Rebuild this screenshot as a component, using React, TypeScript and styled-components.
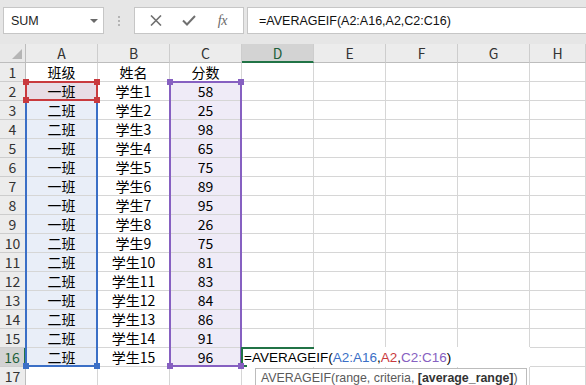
import React from "react";
import styled, { createGlobalStyle } from "styled-components";

const GlobalStyle = createGlobalStyle`
  html, body { margin: 0; padding: 0; background: #ffffff; overflow: hidden; }
  #root { width: 586px; height: 385px; }
`;

const COLW = 72;
const ROWH = 19;
const HDRW = 26;

const BLUE = "#3b6fc6";
const RED = "#c93a3e";
const PURPLE = "#8660c1";
const GREEN = "#217346";

const Page = styled.div`
  width: 586px;
  height: 385px;
  overflow: hidden;
  position: relative;
  background: #ffffff;
`;

const TopBar = styled.div`
  height: 44px;
  box-sizing: border-box;
  background: #e6e6e6;
  display: flex;
  align-items: flex-start;
  padding: 7px 0 0 3px;
`;

const NameBox = styled.div`
  width: 101px;
  height: 27px;
  box-sizing: border-box;
  background: #ffffff;
  border: 1px solid #c6c6c6;
  display: flex;
  align-items: center;
  justify-content: space-between;
  padding: 0 5px 0 7px;
  font-family: "Liberation Sans", Arial, sans-serif;
  font-size: 12.5px;
  color: #222;
`;

const Caret = styled.span`
  width: 0;
  height: 0;
  border-left: 4px solid transparent;
  border-right: 4px solid transparent;
  border-top: 4px solid #6a6a6a;
  margin-top: 1px;
`;

const Grip = styled.div`
  width: 30px;
  height: 27px;
  display: flex;
  flex-direction: column;
  align-items: center;
  justify-content: center;
  gap: 2px;
`;

const GripDot = styled.span`
  width: 2px;
  height: 2px;
  background: #b4b4b4;
`;

const ButtonGroup = styled.div`
  width: 110px;
  height: 27px;
  box-sizing: border-box;
  background: #ffffff;
  border: 1px solid #c6c6c6;
  display: flex;
  align-items: center;
  justify-content: space-around;
  padding: 0 4px;
`;

const IconButton = styled.span`
  width: 26px;
  height: 20px;
  display: flex;
  align-items: center;
  justify-content: center;
  color: #707070;
`;

const Fx = styled.span`
  font-family: "Liberation Serif", "Times New Roman", serif;
  font-style: italic;
  font-size: 14px;
  color: #6a6a6a;
  letter-spacing: -0.5px;
`;

const FormulaInput = styled.div`
  flex: 1;
  margin-left: 3px;
  height: 27px;
  box-sizing: border-box;
  background: #ffffff;
  border: 1px solid #c6c6c6;
  border-right: none;
  display: flex;
  align-items: center;
  padding-left: 11px;
  font-family: "Liberation Sans", Arial, sans-serif;
  font-size: 12.5px;
  color: #111;
  white-space: nowrap;
`;

const SheetArea = styled.div`
  position: relative;
`;

const Grid = styled.div`
  display: grid;
  grid-template-columns: ${HDRW}px repeat(7, ${COLW}px) 56px;
  grid-auto-rows: ${ROWH}px;
`;

const Corner = styled.div`
  position: relative;
  box-sizing: border-box;
  background: #e9e9e9;
  border-right: 1px solid #bdbdbd;
  border-bottom: 1px solid #bdbdbd;
`;

const CornerTriangle = styled.span`
  position: absolute;
  right: 3px;
  bottom: 3px;
  width: 0;
  height: 0;
  border-left: 10px solid transparent;
  border-bottom: 10px solid #b5b5b5;
`;

const ColHeader = styled.div<{ $active?: boolean }>`
  box-sizing: border-box;
  background: ${(p) => (p.$active ? "#d3d3d3" : "#ececec")};
  border-right: 1px solid #cdcdcd;
  border-bottom: ${(p) => (p.$active ? `2px solid ${GREEN}` : "1px solid #bdbdbd")};
  display: flex;
  align-items: center;
  justify-content: center;
  font-family: "Noto Sans CJK SC", "Noto Sans", sans-serif;
  font-size: 14px;
  line-height: 16px;
  color: ${(p) => (p.$active ? "#1d5f3a" : "#333")};
  padding-top: ${(p) => (p.$active ? "1px" : "0")};
`;

const RowHeader = styled.div<{ $active?: boolean }>`
  box-sizing: border-box;
  background: ${(p) => (p.$active ? "#d3d3d3" : "#ececec")};
  border-right: ${(p) => (p.$active ? `2px solid ${GREEN}` : "1px solid #bdbdbd")};
  border-bottom: 1px solid #cdcdcd;
  display: flex;
  align-items: center;
  justify-content: center;
  font-family: "Noto Sans CJK SC", "Noto Sans", sans-serif;
  font-size: 14px;
  line-height: 18px;
  color: ${(p) => (p.$active ? "#1d5f3a" : "#333")};
`;

const Cell = styled.div<{ $fill?: string }>`
  box-sizing: border-box;
  background: ${(p) => p.$fill || "#ffffff"};
  border-right: 1px solid #d6d6d6;
  border-bottom: 1px solid #d6d6d6;
  display: flex;
  align-items: center;
  justify-content: center;
  font-family: "Noto Sans CJK SC", "Noto Sans", sans-serif;
  font-size: 14px;
  line-height: 18px;
  color: #000;
  white-space: nowrap;
`;

const RangeBox = styled.div<{ $x: number; $y: number; $w: number; $h: number; $color: string }>`
  position: absolute;
  left: ${(p) => p.$x}px;
  top: ${(p) => p.$y}px;
  width: ${(p) => p.$w}px;
  height: ${(p) => p.$h}px;
  box-sizing: border-box;
  border: 2px solid ${(p) => p.$color};
  z-index: 1;
  pointer-events: none;
`;

const Handle = styled.span<{ $x: number; $y: number; $color: string }>`
  position: absolute;
  left: ${(p) => p.$x - 2}px;
  top: ${(p) => p.$y - 2}px;
  width: 6px;
  height: 6px;
  background: ${(p) => p.$color};
  z-index: 4;
`;

const EditBox = styled.div`
  position: absolute;
  left: ${HDRW + COLW * 3 - 1}px;
  top: ${ROWH * 16 - 1}px;
  width: 289px;
  height: 20px;
  background: #ffffff;
  z-index: 2;
  display: flex;
  align-items: center;
  padding-left: 3px;
  box-sizing: border-box;
  font-family: "Liberation Sans", Arial, sans-serif;
  font-size: 13.5px;
  color: #000;
  white-space: nowrap;
`;

const EditFrame = styled.span`
  position: absolute;
  left: 0;
  top: 0;
  width: 73px;
  height: 20px;
  box-sizing: border-box;
  border-top: 2px solid ${GREEN};
  border-left: 2px solid ${GREEN};
`;

const EditFoot = styled.span`
  position: absolute;
  left: 0;
  bottom: 0;
  width: 6px;
  height: 2px;
  background: ${GREEN};
`;

const Ref = styled.span<{ $color: string }>`
  color: ${(p) => p.$color};
`;

const Tooltip = styled.div`
  position: absolute;
  left: 255px;
  top: ${368 - 44}px;
  width: 272px;
  height: 20px;
  box-sizing: border-box;
  background: #ffffff;
  border: 1px solid #bcbcbc;
  z-index: 5;
  display: flex;
  align-items: center;
  padding-left: 5px;
  font-family: "Liberation Sans", Arial, sans-serif;
  font-size: 12.4px;
  color: #5a5a5a;
  white-space: nowrap;
`;

const Bold = styled.b`
  color: #333;
  font-weight: 700;
`;

type Row = [string, string, string];

const header: Row = ["班级", "姓名", "分数"];
const data: Row[] = [
  ["一班", "学生1", "58"],
  ["二班", "学生2", "25"],
  ["二班", "学生3", "98"],
  ["一班", "学生4", "65"],
  ["一班", "学生5", "75"],
  ["一班", "学生6", "89"],
  ["一班", "学生7", "95"],
  ["一班", "学生8", "26"],
  ["二班", "学生9", "75"],
  ["二班", "学生10", "81"],
  ["二班", "学生11", "83"],
  ["一班", "学生12", "84"],
  ["二班", "学生13", "86"],
  ["二班", "学生14", "91"],
  ["二班", "学生15", "96"],
];

const columns = ["A", "B", "C", "D", "E", "F", "G", "H"];

function box(c0: number, c1: number, r0: number, r1: number) {
  return {
    x: HDRW + COLW * c0 - 1,
    y: ROWH * r0 - 1,
    w: COLW * (c1 - c0 + 1) + 1,
    h: ROWH * (r1 - r0 + 1) + 1,
  };
}

const Range: React.FC<{ c0: number; c1: number; r0: number; r1: number; color: string }> = ({
  c0,
  c1,
  r0,
  r1,
  color,
}) => {
  const b = box(c0, c1, r0, r1);
  const corners = [
    [b.x, b.y],
    [b.x + b.w - 2, b.y],
    [b.x, b.y + b.h - 2],
    [b.x + b.w - 2, b.y + b.h - 2],
  ];
  return (
    <>
      <RangeBox $x={b.x} $y={b.y} $w={b.w} $h={b.h} $color={color} />
      {corners.map(([x, y], i) => (
        <Handle key={i} $x={x} $y={y} $color={color} />
      ))}
    </>
  );
};

function fillFor(col: number, row: number): string | undefined {
  if (col === 0 && row === 2) return "#e8dde6";
  if (col === 0 && row >= 3 && row <= 16) return "#e9eef8";
  if (col === 2 && row >= 2 && row <= 16) return "#efebf7";
  return undefined;
}

export default function App() {
  const rows: Row[] = [header, ...data, ["", "", ""]];
  return (
    <Page>
      <GlobalStyle />
      <TopBar>
        <NameBox>
          <span>SUM</span>
          <Caret />
        </NameBox>
        <Grip>
          <GripDot />
          <GripDot />
          <GripDot />
        </Grip>
        <ButtonGroup>
          <IconButton>
            <svg width="12" height="11" viewBox="0 0 12 11">
              <path d="M1 0.5 L11 10.5 M11 0.5 L1 10.5" stroke="#707070" strokeWidth="1.6" fill="none" />
            </svg>
          </IconButton>
          <IconButton>
            <svg width="14" height="11" viewBox="0 0 14 11">
              <path d="M1 5.5 L5 9.5 L13 1" stroke="#707070" strokeWidth="2" fill="none" />
            </svg>
          </IconButton>
          <IconButton>
            <Fx>fx</Fx>
          </IconButton>
        </ButtonGroup>
        <FormulaInput>=AVERAGEIF(A2:A16,A2,C2:C16)</FormulaInput>
      </TopBar>
      <SheetArea>
        <Grid>
          <Corner>
            <CornerTriangle />
          </Corner>
          {columns.map((c) => (
            <ColHeader key={c} $active={c === "D"}>
              {c}
            </ColHeader>
          ))}
          {rows.map((r, i) => {
            const rowNum = i + 1;
            return (
              <React.Fragment key={rowNum}>
                <RowHeader $active={rowNum === 16}>{rowNum}</RowHeader>
                {columns.map((c, ci) => (
                  <Cell key={c} $fill={fillFor(ci, rowNum)}>
                    {ci < 3 ? r[ci] : ""}
                  </Cell>
                ))}
              </React.Fragment>
            );
          })}
        </Grid>
        <Range c0={0} c1={0} r0={2} r1={16} color={BLUE} />
        <Range c0={2} c1={2} r0={2} r1={16} color={PURPLE} />
        <Range c0={0} c1={0} r0={2} r1={2} color={RED} />
        <EditBox>
          <EditFrame />
          <EditFoot />
          =AVERAGEIF(<Ref $color={BLUE}>A2:A16</Ref>,<Ref $color={RED}>A2</Ref>,
          <Ref $color={PURPLE}>C2:C16</Ref>)
        </EditBox>
        <Tooltip>
          AVERAGEIF(range, criteria,&nbsp;<Bold>[average_range]</Bold>)
        </Tooltip>
      </SheetArea>
    </Page>
  );
}
